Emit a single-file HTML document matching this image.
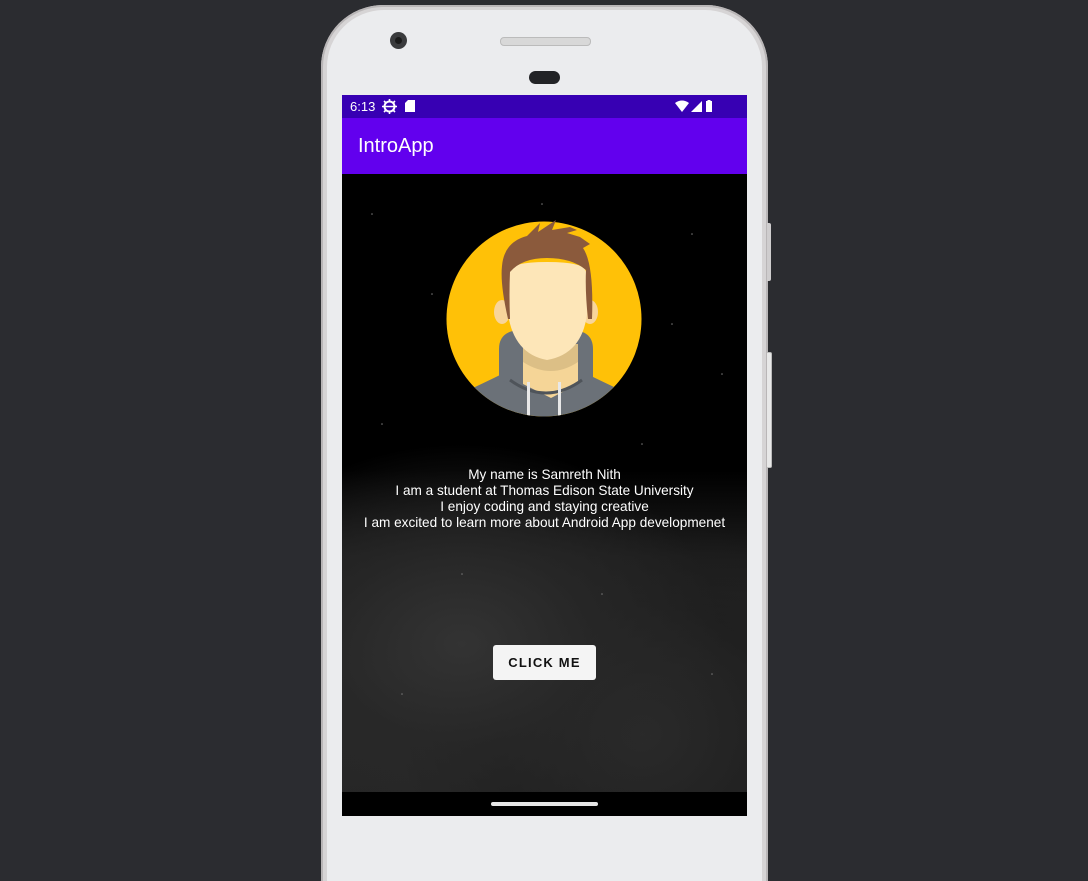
<!DOCTYPE html>
<html><head><meta charset="utf-8"><style>
html,body{margin:0;padding:0;width:1088px;height:881px;overflow:hidden;}
body{background:#2b2c30;font-family:"Liberation Sans",Roboto,sans-serif;}
.wrap{position:absolute;left:0;top:0;width:1088px;height:881px;overflow:hidden;}
.rim{position:absolute;left:321px;top:5px;width:447px;height:940px;border-radius:62px;background:#d6d4d5;box-shadow:inset 0 0 0 2px #b9b6b7;}
.body{position:absolute;left:327px;top:10px;width:435px;height:930px;border-radius:57px;background:#ebecee;}
.btn1{position:absolute;left:767px;top:223px;width:4px;height:58px;background:#cfcdce;border-radius:0 2px 2px 0;}
.btn2{position:absolute;left:767px;top:352px;width:4px;height:114px;background:#e8e8e8;border-radius:0 2px 2px 0;border:1px solid #bbb;border-left:none;}
.cam{position:absolute;left:390px;top:32px;width:17px;height:17px;border-radius:50%;background:#3a3b3d;}
.cam:after{content:"";position:absolute;left:5px;top:5px;width:7px;height:7px;border-radius:50%;background:#1a1a1a;}
.spk{position:absolute;left:500px;top:37px;width:89px;height:7px;border-radius:4px;background:#d8d8d8;border:1px solid #bbb;}
.sens{position:absolute;left:529px;top:71px;width:31px;height:13px;border-radius:7px;background:#222326;}
.screen{position:absolute;left:342px;top:95px;width:405px;height:721px;background:#000;overflow:hidden;}
.status{position:absolute;left:0;top:0;width:405px;height:23px;background:#3700b3;color:#fff;font-size:13px;}
.appbar{position:absolute;left:0;top:23px;width:405px;height:56px;background:#6200ee;color:#fff;font-size:20px;}
.content{position:absolute;left:0;top:79px;width:405px;height:618px;background:
radial-gradient(ellipse 260px 200px at 120px 470px,#333 0%,rgba(40,40,40,.8) 50%,rgba(0,0,0,0) 100%),
radial-gradient(ellipse 240px 220px at 300px 560px,#2a2a2a 0%,rgba(30,30,30,.8) 60%,rgba(0,0,0,0) 100%),
linear-gradient(#000 0%,#000 48%,#1c1c1c 62%,#2a2a2a 80%,#262626 100%);}
.nav{position:absolute;left:0;top:697px;width:405px;height:24px;background:#000;}
.nav div{position:absolute;left:149px;top:10px;width:107px;height:4px;border-radius:2px;background:#e6e6e6;}
.text{position:absolute;left:-20px;top:293px;width:445px;text-align:center;color:#fff;font-size:13.6px;line-height:16px;}
.cbtn{position:absolute;left:151px;top:471px;width:103px;height:35px;background:#f4f4f4;border-radius:3px;color:#111;font-size:13px;font-weight:bold;letter-spacing:1.2px;text-align:center;line-height:35px;}
</style></head><body><div class="wrap">
<div class="rim"></div><div class="body"></div>
<div class="btn1"></div><div class="btn2"></div>
<div class="cam"></div><div class="spk"></div><div class="sens"></div>
<div class="screen">
 <div class="status">
  <span style="position:absolute;left:8px;top:4px;">6:13</span>
  <svg style="position:absolute;left:40px;top:4px" width="15" height="15" viewBox="0 0 15 15"><circle cx="7.5" cy="7.5" r="5" fill="none" stroke="#fff" stroke-width="2"/><path d="M7.5 0v3M7.5 12v3M0 7.5h3M12 7.5h3M2 2l2 2M11 11l2 2M2 13l2-2M11 4l2-2M3 7.5h9" stroke="#fff" stroke-width="1.6"/></svg>
  <svg style="position:absolute;left:63px;top:5px" width="10" height="12" viewBox="0 0 10 12"><path d="M3 0h7v12H0V3z" fill="#fff"/></svg>
  <svg style="position:absolute;left:333px;top:5px" width="40" height="13" viewBox="0 0 40 13"><path d="M0 3Q7-2 14 3L7 12z" fill="#fff"/><path d="M16 12L27 1v11z" fill="#fff"/><rect x="31" y="1" width="6" height="11" fill="#fff"/><rect x="32.5" y="0" width="3" height="2" fill="#fff"/></svg>
 </div>
 <div class="appbar"><span style="position:absolute;left:16px;top:17px;">IntroApp</span></div>
 <div class="content">
  <svg width="405" height="618" style="position:absolute;left:0;top:0">
   <g fill="#777"><circle cx="30" cy="40" r=".8"/><circle cx="90" cy="120" r=".8"/><circle cx="350" cy="60" r=".8"/><circle cx="380" cy="200" r=".8"/><circle cx="40" cy="250" r=".8"/><circle cx="300" cy="270" r=".8"/><circle cx="200" cy="30" r=".8"/><circle cx="120" cy="400" r=".8"/><circle cx="260" cy="420" r=".8"/><circle cx="60" cy="520" r=".8"/><circle cx="370" cy="500" r=".8"/><circle cx="330" cy="150" r=".8"/></g>
   <defs><clipPath id="c"><circle cx="202" cy="145" r="97.5"/></clipPath></defs>
   <circle cx="202" cy="145" r="97.5" fill="#ffc107"/>
   <g clip-path="url(#c)">
    <path d="M60 260Q70 222 133 213Q150 205 160 200L245 200Q255 205 272 213Q330 222 340 260z" fill="#6b7178"/>
    <path d="M157 175Q157 156 180 156L228 156Q251 156 251 175L251 205Q204 230 157 205z" fill="#6b7178"/>
    <path d="M181 170h55v40l-27 14-28-14z" fill="#f5d597"/>
    <path d="M181 170h55v18q-27 18-55 0z" fill="#dcbf86"/>
    <path d="M168 206q36 26 72 0" stroke="#4f545a" stroke-width="3" fill="none"/>
    <rect x="185" y="208" width="3" height="40" fill="#e8e8e8"/><rect x="216" y="208" width="3" height="40" fill="#e8e8e8"/>
   </g>
   <ellipse cx="160" cy="138" rx="8" ry="12" fill="#f8d59b"/><ellipse cx="248" cy="138" rx="8" ry="12" fill="#f8d59b"/>
   <path d="M167 98Q168 88 205 88Q243 88 244 98L245 140Q240 180 205 186Q172 180 166 140z" fill="#fde6b8"/>
   <path d="M166 145Q158 110 160 92Q162 68 185 62L198 49 196 58 214 46 210 56 228 53 235 56 225 59 238 63 248 70 241 74Q252 90 250 145L246 145Q243 118 244 96Q230 84 205 84Q180 84 168 98Q167 120 168 145z" fill="#8b5a3c"/>
  </svg>
  <div class="text">My name is Samreth Nith<br>I am a student at Thomas Edison State University<br>I enjoy coding and staying creative<br>I am excited to learn more about Android App developmenet</div>
  <div class="cbtn">CLICK ME</div>
 </div>
 <div class="nav"><div></div></div>
</div>
</div></body></html>
